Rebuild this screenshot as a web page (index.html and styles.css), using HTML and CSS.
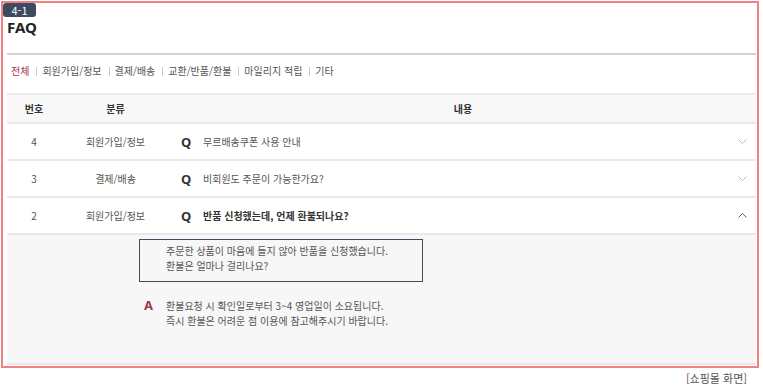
FILE: index.html
```html
<!DOCTYPE html>
<html lang="ko">

<head>
    <meta charset="UTF-8" />
    <meta name="viewport" content="width=device-width, initial-scale=1" />
    <title>FAQ</title>
    <link rel="stylesheet" href="styles.css">
</head>

<body>
    <div class="frame">
        <span class="badge">4-1</span>
        <div class="inner">
            <h2 class="title">FAQ</h2>

            <ul class="tabs">
                <li class="active">전체</li>
                <li>회원가입/정보</li>
                <li>결제/배송</li>
                <li>교환/반품/환불</li>
                <li>마일리지 적립</li>
                <li>기타</li>
            </ul>

            <div class="faq">
                <div class="row head">
                    <div class="num">번호</div>
                    <div class="cat">분류</div>
                    <div class="content">내용</div>
                </div>

                <div class="row">
                    <div class="num">4</div>
                    <div class="cat">회원가입/정보</div>
                    <div class="content">
                        <span class="q">Q</span>
                        <span class="text">무르배송쿠폰 사용 안내</span>
                        <svg class="chev" width="9" height="5" viewBox="0 0 9 5">
                            <path d="M.5.5l4 4 4-4" fill="none" stroke="#bbb" />
                        </svg>
                    </div>
                </div>

                <div class="row">
                    <div class="num">3</div>
                    <div class="cat">결제/배송</div>
                    <div class="content">
                        <span class="q">Q</span>
                        <span class="text">비회원도 주문이 가능한가요?</span>
                        <svg class="chev" width="9" height="5" viewBox="0 0 9 5">
                            <path d="M.5.5l4 4 4-4" fill="none" stroke="#bbb" />
                        </svg>
                    </div>
                </div>

                <div class="row open">
                    <div class="num">2</div>
                    <div class="cat">회원가입/정보</div>
                    <div class="content">
                        <span class="q">Q</span>
                        <span class="text">반품 신청했는데, 언제 환불되나요?</span>
                        <svg class="chev" width="9" height="5" viewBox="0 0 9 5">
                            <path d="M.5 4.5l4-4 4 4" fill="none" stroke="#666" />
                        </svg>
                    </div>
                </div>

                <div class="answer">
                    <div class="question-box">
                        주문한 상품이 마음에 들지 않아 반품을 신청했습니다.<br>
                        환불은 얼마나 걸리나요?
                    </div>
                    <div class="reply">
                        <span class="a">A</span>
                        <p>환불요청 시 확인일로부터 3~4 영업일이 소요됩니다.<br>
                            즉시 환불은 어려운 점 이용에 참고해주시기 바랍니다.</p>
                    </div>
                </div>
            </div>
        </div>
    </div>

    <p class="caption">[쇼핑몰 화면]</p>
</body>

</html>
```

FILE: styles.css
```css
* {
    box-sizing: border-box;
}

body {
    margin: 0;
    font-family: "Noto Sans CJK KR", "Noto Sans", sans-serif;
    color: #555;
    background: #fff;
}

.frame {
    width: 758px;
    margin: 1px 0 0 1px;
    border: 2px solid #f28282;
    padding-bottom: 1px;
}

.badge {
    display: block;
    width: 33px;
    height: 14px;
    line-height: 14px;
    background: #3e4a61;
    color: #fff;
    font-size: 11px;
    text-align: center;
    border-radius: 3px;
}

.inner {
    padding: 0 1px 0 4px;
}

.title {
    margin: 0;
    padding-bottom: 15px;
    font-family: "Noto Sans", sans-serif;
    font-size: 15px;
    line-height: 21px;
    font-weight: 700;
    color: #222;
    border-bottom: 2px solid #d2d2d2;
}

.tabs {
    display: flex;
    margin: 0;
    padding: 9px 0 15px 4px;
    list-style: none;
    font-size: 10px;
    line-height: 14px;
    color: #555;
}

.tabs li {
    display: flex;
    align-items: center;
}

.tabs li + li::before {
    content: "";
    width: 1px;
    height: 9px;
    margin: 0 5px 0 7px;
    background: #ccc;
}

.tabs .active {
    color: #a3354d;
}

.faq {
    border-top: 2px solid #ececec;
    border-bottom: 2px solid #e8e8e8;
    font-size: 10px;
}

.row {
    display: grid;
    grid-template-columns: 54px 109px 1fr;
    align-items: center;
    height: 37px;
    border-bottom: 2px solid #e8e8e8;
}

.row.head {
    height: 29px;
    background: #f8f8f8;
    color: #333;
    font-weight: 700;
}

.num,
.cat {
    text-align: center;
}

.content {
    display: flex;
    align-items: center;
    padding: 0 9px 0 11px;
}

.head .content {
    justify-content: center;
    padding: 0;
}

.q {
    width: 22px;
    font-family: "Noto Sans", sans-serif;
    font-size: 13px;
    font-weight: 700;
    color: #333;
}

.chev {
    margin-left: auto;
}

.open .text {
    font-weight: 700;
    color: #333;
}

.answer {
    height: 128px;
    padding: 4px 0 0 132px;
    background: #f7f7f7;
}

.question-box {
    width: 284px;
    height: 43px;
    padding: 3px 0 0 26px;
    border: 1px solid #3e4a61;
    line-height: 15px;
}

.reply {
    display: flex;
    margin-top: 16px;
    padding-left: 5px;
}

.reply .a {
    width: 22px;
    font-family: "Noto Sans", sans-serif;
    font-size: 13px;
    line-height: 15px;
    font-weight: 700;
    color: #a3354d;
}

.reply p {
    margin: 0;
    line-height: 15px;
}

.caption {
    margin: 3px 0 0;
    padding-right: 16px;
    text-align: right;
    font-size: 11px;
    line-height: 14px;
    color: #555;
}
```
